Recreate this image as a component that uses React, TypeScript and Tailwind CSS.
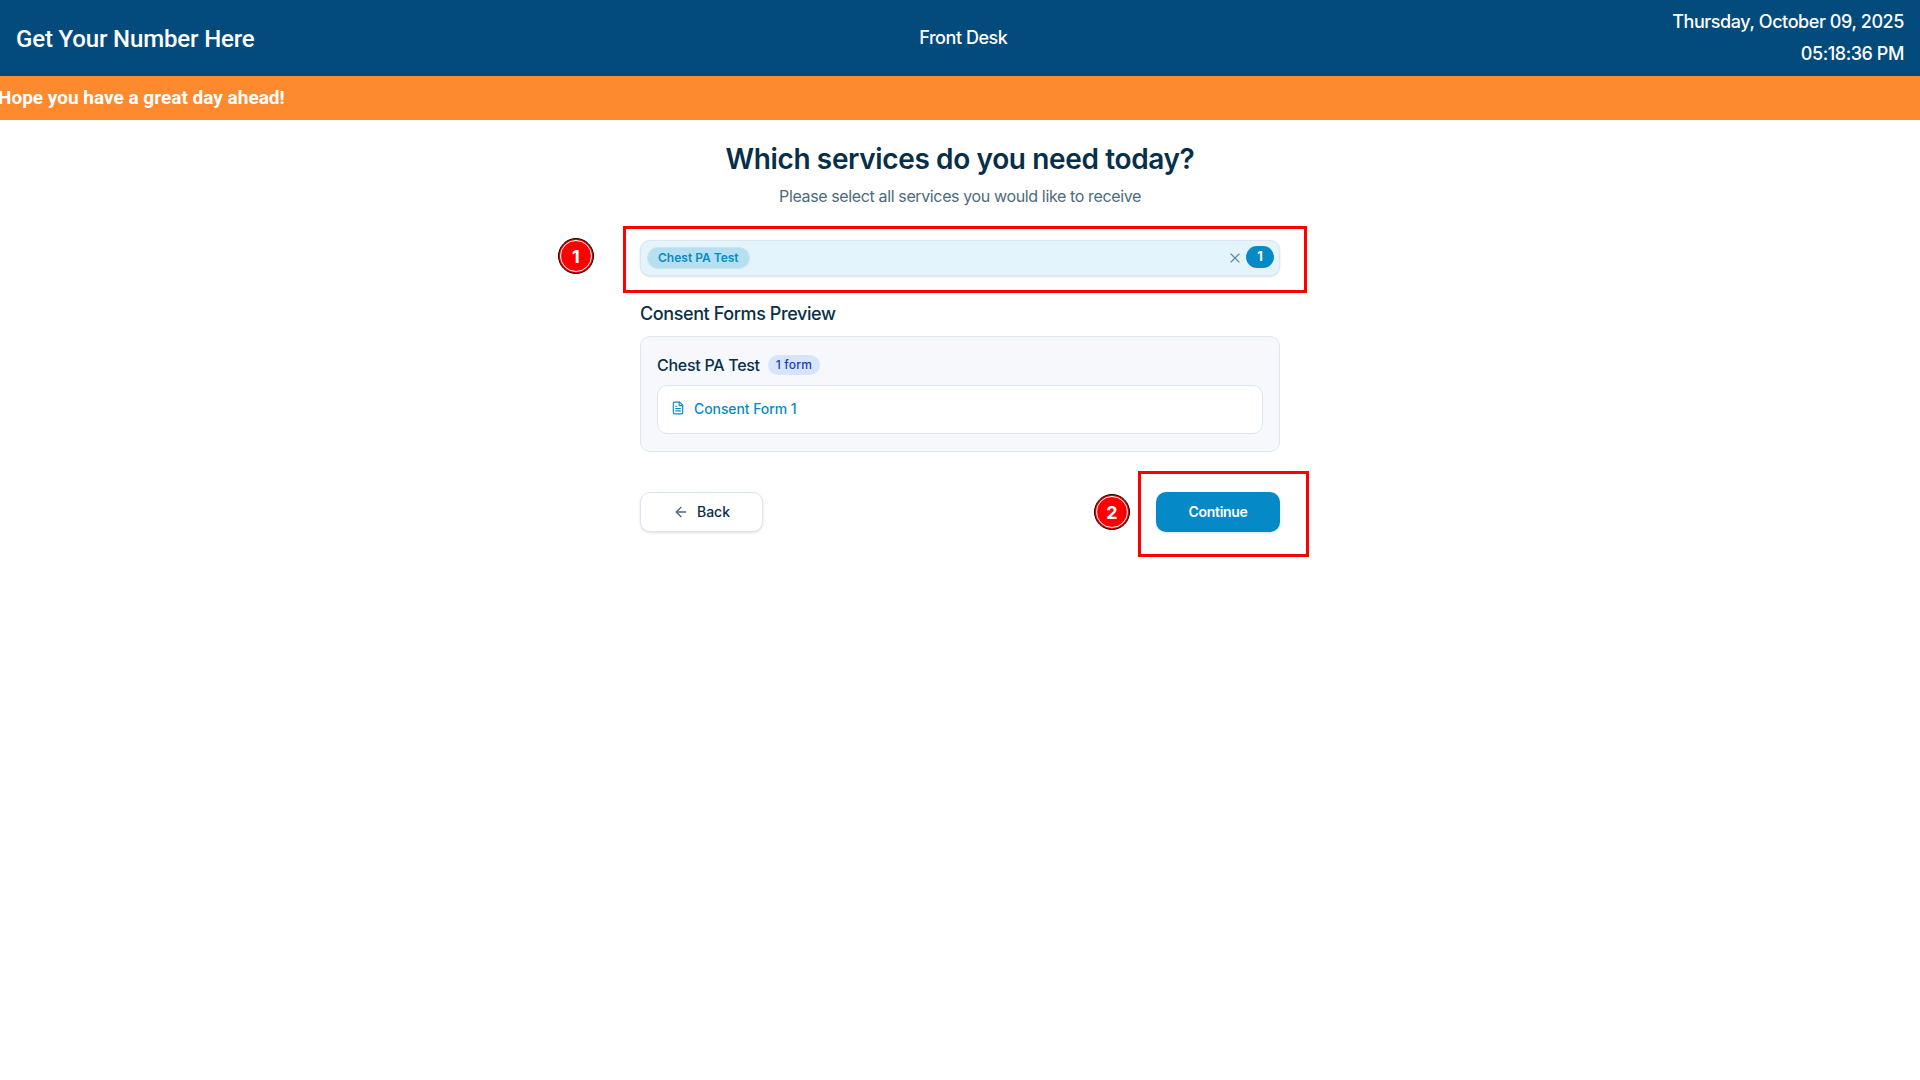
import { ArrowLeft, FileText, X } from "lucide-react";

const Marker = ({ n, className }: { n: number; className: string }) => (
  <div
    className={`absolute flex h-[36px] w-[36px] items-center justify-center rounded-full border-[1.5px] border-black bg-[#ff0000] text-[18px] font-bold text-white outline outline-1 outline-white -outline-offset-[3px] ${className}`}
  >
    {n}
  </div>
);

const App = () => {
  return (
    <div className="min-h-[1080px] bg-white font-['Inter',sans-serif] text-[#082f49]">
      <header className="flex h-[76px] items-center justify-between bg-[#034b7c] px-4 text-white">
        <h1 className="pt-[2px] font-['Roboto',sans-serif] text-[24px] font-medium tracking-[-0.15px]">
          Get Your Number Here
        </h1>
        <div className="pb-[2px] text-[18px] font-medium tracking-[-0.45px]">Front Desk</div>
        <div className="text-right text-[18px] font-medium leading-[32px] tracking-[-0.42px]">
          <div>Thursday, October 09, 2025</div>
          <div>05:18:36 PM</div>
        </div>
      </header>

      <div className="flex h-[44px] items-center overflow-hidden bg-[#fd8a2e]">
        <span className="-ml-[2px] whitespace-nowrap font-['Roboto',sans-serif] text-[19px] font-bold text-white">
          Hope you have a great day ahead!
        </span>
      </div>

      <main className="mx-auto w-[640px] pt-[20px]">
        <div className="text-center">
          <h2 className="text-[28px] font-semibold leading-[38px] tracking-[-0.37px]">
            Which services do you need today?
          </h2>
          <p className="mt-[6px] text-[16px] leading-[24px] tracking-[-0.37px] text-[#4d6a7c]">
            Please select all services you would like to receive
          </p>
        </div>

        <div className="relative mt-[32px]">
          <Marker n={1} className="left-[-82px] top-[-2px]" />
          <div className="pointer-events-none absolute -bottom-[17px] -left-[17px] -right-[27px] -top-[14px] border-[3px] border-[#ff0000]" />
          <div className="flex h-[36px] items-center justify-between rounded-[10px] border border-[#dbe6ef] bg-[#e3f4fc] pl-[6px] pr-[5px] shadow-sm">
            <span className="rounded-full border border-[#cfe3ee] bg-[#b6e0f1] px-[10px] py-[2px] text-[12px] font-semibold leading-[16px] text-[#0a8ac4]">
              Chest PA Test
            </span>
            <div className="flex items-center gap-[3px]">
              <X className="h-[16px] w-[16px] text-[#5b87a3]" strokeWidth={1.75} />
              <span className="mb-[2px] flex h-[22px] w-[28px] items-center justify-center rounded-full bg-[#0689c7] text-[13px] font-bold text-white">
                1
              </span>
            </div>
          </div>
        </div>

        <h3 className="mt-[26px] text-[18px] font-medium leading-[24px] tracking-[-0.4px]">Consent Forms Preview</h3>

        <div className="mt-[10px] h-[116px] rounded-[10px] border border-[#dde5ee] bg-[#f6f8fc] px-[16px] pt-[16px]">
          <div className="flex h-[24px] items-center gap-[8px]">
            <span className="text-[16px] font-medium tracking-[-0.28px]">Chest PA Test</span>
            <span className="rounded-full bg-[#d6e5fd] px-[8px] py-[2px] text-[12px] font-medium leading-[16px] tracking-[0.2px] text-[#1e40af]">
              1 form
            </span>
          </div>
          <div className="mt-[8px] flex h-[49px] items-center gap-[9px] rounded-[10px] border border-[#dde5ee] bg-white px-[13px] pb-[3px] text-[14px] font-medium tracking-[-0.08px] text-[#0a8ac4]">
            <FileText className="h-[14px] w-[14px]" />
            Consent Form 1
          </div>
        </div>

        <div className="mt-[40px] flex items-center justify-between">
          <button className="flex h-[40px] w-[123px] items-center justify-center gap-[8px] rounded-[10px] border-[1.5px] border-[#dbe6ef] bg-white pb-[1px] text-[14px] font-medium shadow-sm">
            <ArrowLeft className="h-[16px] w-[16px] text-[#4d6a7c]" />
            Back
          </button>
          <div className="relative">
            <Marker n={2} className="left-[-62px] top-[2px]" />
            <div className="pointer-events-none absolute -bottom-[25px] -left-[18px] -right-[29px] -top-[21px] border-[3px] border-[#ff0000]" />
            <button className="h-[40px] w-[124px] rounded-[10px] bg-[#0689c7] pb-[1px] text-[14px] font-semibold tracking-[-0.3px] text-white shadow-sm">
              Continue
            </button>
          </div>
        </div>
      </main>
    </div>
  );
};

export default App;
